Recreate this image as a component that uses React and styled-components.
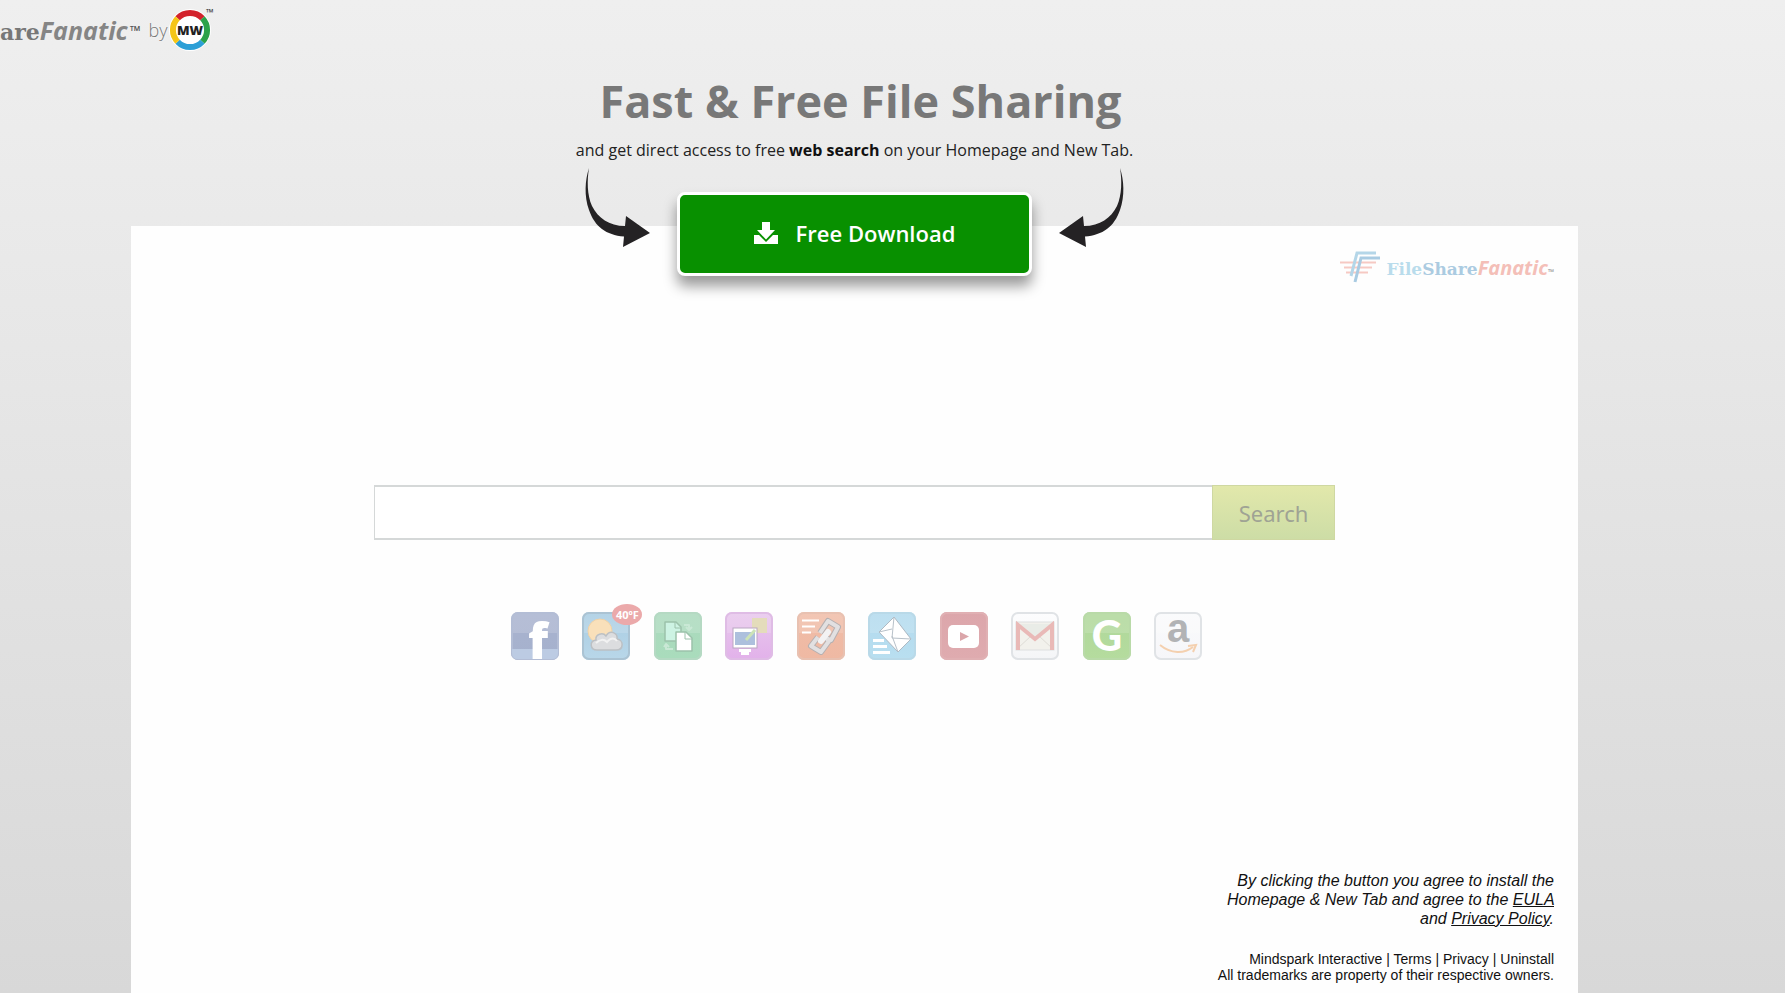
import { useId } from 'react';
import styled, { createGlobalStyle } from 'styled-components';

const App = () => {
  return (
    <Page>
      <GlobalStyle />
      <TopBar>
        <BrandLink href='#home'>
          <Slab>are</Slab>
          <Slanted>Fanatic</Slanted>
          <Trademark>™</Trademark>
        </BrandLink>
        <By>by</By>
        <MwLogo />
      </TopBar>
      <Column>
        <Hero>
          <Title>Fast &amp; Free File Sharing</Title>
          <Subtitle>
            and get direct access to free <b>web search</b> on your Homepage and
            New Tab.
          </Subtitle>
          <DownloadRow>
            <Arrow />
            <DownloadButton type='button'>
              <DownloadIcon />
              Free Download
            </DownloadButton>
            <Arrow $flip />
          </DownloadRow>
        </Hero>
        <Panel>
          <ProductLogo>
            <FlagMark />
            <ProductName>
              <ProductFile>File</ProductFile>
              <ProductShare>Share</ProductShare>
              <ProductFanatic>Fanatic</ProductFanatic>
              <ProductTm>™</ProductTm>
            </ProductName>
          </ProductLogo>
          <SearchForm onSubmit={(e) => e.preventDefault()}>
            <SearchInput type='text' aria-label='Search the web' />
            <SearchButton type='submit'>Search</SearchButton>
          </SearchForm>
          <Shortcuts>
            {shortcuts.map(({ name, Art, badge, ...tile }) => (
              <Shortcut key={name} href={`#${name}`} aria-label={name}>
                <Tile {...tile}>
                  <Art />
                </Tile>
                {badge && <Badge>{badge}</Badge>}
              </Shortcut>
            ))}
          </Shortcuts>
          <Footer>
            <Agreement>
              By clicking the button you agree to install the Homepage &amp; New
              Tab and agree to the <a href='#eula'>EULA</a> and{' '}
              <a href='#privacy-policy'>Privacy Policy</a>.
            </Agreement>
            <Legal>
              <a href='#mindspark'>Mindspark Interactive</a> |{' '}
              <a href='#terms'>Terms</a> | <a href='#privacy'>Privacy</a> |{' '}
              <a href='#uninstall'>Uninstall</a>
              <br />
              All trademarks are property of their respective owners.
            </Legal>
          </Footer>
        </Panel>
      </Column>
    </Page>
  );
};

export default App;

const MwLogo = () => (
  <MwSvg viewBox='0 0 46 48' role='img' aria-label='MW'>
    <circle cx='22' cy='26' r='21' fill='#fff' />
    <g fill='none' strokeWidth='6'>
      <path d='M9.6 14.3A17 17 0 0 1 34.4 14.3' stroke='#d3222c' />
      <path d='M34.4 14.3A17 17 0 0 1 34.4 37.7' stroke='#2ba24a' />
      <path d='M34.4 37.7A17 17 0 0 1 9.6 37.7' stroke='#2c9fd6' />
      <path d='M9.6 37.7A17 17 0 0 1 9.6 14.3' stroke='#f5c518' />
    </g>
    <text
      x='22'
      y='31'
      textAnchor='middle'
      fontFamily='"Open Sans", sans-serif'
      fontWeight='800'
      fontSize='13'
      fill='#222'
    >
      MW
    </text>
    <text x='38' y='12' fontFamily='"Open Sans", sans-serif' fontSize='10' fill='#333'>
      ™
    </text>
  </MwSvg>
);

const Arrow = ({ $flip }) => (
  <ArrowSvg $flip={$flip} viewBox='0 0 66 80' aria-hidden='true'>
    <path
      d='M5 0C1 12 0 28 5 42C11 59 22 67 40 68.500L39 79L66 65L42 48L41 58C25 58 14 50 8 38C3 27 3 12 5 0Z'
      fill='#242224'
    />
  </ArrowSvg>
);

const DownloadIcon = () => (
  <svg width='24' height='22' viewBox='0 0 24 22' fill='#fff' aria-hidden='true'>
    <path d='M8 0H16V8H21L12 17.500L3 8H8Z' />
    <path d='M0 13H5L12 20L19 13H24V22H0Z' />
  </svg>
);

const FlagMark = () => (
  <svg width='40' height='32' viewBox='0 0 40 32' fill='none' aria-hidden='true'>
    <path d='M0 11.500H36M4 16.500H32M6 21.500H28' stroke='#f6c9c3' strokeWidth='2' />
    <path d='M36 2H17L11 25' stroke='#b4d6e8' strokeWidth='3' />
    <path d='M40 7H21L15 31' stroke='#a9cbe2' strokeWidth='3' />
  </svg>
);

const Tile = ({ top, bottom, edge, gloss = 0.15, children }) => {
  const id = useId();
  return (
    <TileSvg viewBox='0 0 48 48' aria-hidden='true'>
      <defs>
        <linearGradient id={id} x1='0' y1='0' x2='0' y2='1'>
          <stop offset='0' stopColor={top} />
          <stop offset='1' stopColor={bottom} />
        </linearGradient>
      </defs>
      <rect width='48' height='48' rx='7' fill={`url(#${id})`} />
      <path d='M0 21V7Q0 0 7 0H41Q48 0 48 7V21Z' fill='#fff' opacity={gloss} />
      <rect x='1' y='1' width='46' height='46' rx='6' fill='none' stroke={edge} strokeWidth='2' />
      {children}
    </TileSvg>
  );
};

const FacebookArt = () => (
  <>
    <path d='M1 37H47V41Q47 47 41 47H7Q1 47 1 41Z' fill='#bccbe3' />
    <text x='17' y='47' fontFamily='"Open Sans", sans-serif' fontWeight='800' fontSize='49' fill='#fff'>
      f
    </text>
  </>
);

const WeatherArt = () => (
  <>
    <circle cx='18' cy='19' r='12' fill='#f9e0ba' stroke='#efd2a8' />
    <path
      d='M15 38C8 38 7 29 14 28C13 22 21 20 24 24C28 17 36 21 35 27C42 28 42 38 34 38Z'
      fill='#dcdddf'
      stroke='#bcc0c4'
      strokeWidth='1.500'
    />
    <path d='M14 31C18 27 22 27 25 30C29 25 33 26 35 29' stroke='#f2f2f2' strokeWidth='2' fill='none' />
  </>
);

const FilesArt = () => (
  <g strokeLinejoin='round'>
    <path d='M11 10H22L27 15V29H11Z' fill='#cdf3e3' stroke='#9cc2ab' strokeWidth='1.500' />
    <path d='M21 10V16H27' fill='none' stroke='#9cc2ab' />
    <path d='M22 20H32L38 26V39H22Z' fill='#fff' stroke='#9cc2ab' strokeWidth='1.500' />
    <path d='M31 20V27H38' fill='none' stroke='#9cc2ab' />
    <path d='M30 13H35V17M32 15L35 18L38 15M19 37H12V33M10 35L12 32L15 35' fill='none' stroke='#c9e8d5' strokeWidth='2' />
  </g>
);

const ScreenArt = () => (
  <>
    <rect x='27' y='6' width='15' height='15' fill='#e4dcbb' />
    <rect x='8' y='16' width='24' height='20' fill='#fff' stroke='#b9a7c1' />
    <rect x='10' y='20' width='20' height='13' fill='#adc0dd' />
    <path d='M21 28L30 18' stroke='#cce3b7' strokeWidth='3' />
    <path d='M14 38.500H26M16 41.500H24' stroke='#fff' strokeWidth='3' />
  </>
);

const LinkArt = () => (
  <>
    <path d='M5 8.500H22M5 14.500H18M5 20.500H14' stroke='#fff' strokeWidth='2' />
    <g fill='none' strokeLinejoin='round'>
      <g stroke='#b5b0b1' strokeWidth='6'>
        <path d='M23 21L31 9L41 15L34 28L29 26' />
        <path d='M21 25L14 34L24 40L32 29L28 25' />
      </g>
      <g stroke='#e2e0e1' strokeWidth='4'>
        <path d='M23 21L31 9L41 15L34 28L29 26' />
        <path d='M21 25L14 34L24 40L32 29L28 25' />
      </g>
      <path d='M24 29L31 20' stroke='#f3f2f3' strokeWidth='6' strokeLinecap='round' />
    </g>
  </>
);

const MailArt = () => (
  <>
    <path d='M5 28.500H16M5 34.500H19M5 40.500H22' stroke='#fff' strokeWidth='3' />
    <path
      d='M11 20L26 5L43 27L30 40Z'
      fill='#fff'
      stroke='#aeb9c3'
      strokeLinejoin='round'
    />
    <path d='M11 20L24 17M26 5L24 26L43 27M24 24L30 40' fill='none' stroke='#b8c1c9' />
  </>
);

const YoutubeArt = () => (
  <>
    <rect x='8' y='13' width='31' height='23' rx='5' fill='#fff' />
    <path d='M20 20L29 24.500L20 29Z' fill='#dba6aa' />
  </>
);

const GmailArt = () => (
  <>
    <rect x='5' y='10' width='38' height='28' fill='#f2f1ec' stroke='#dedfe0' />
    <path d='M6 37L20 24M42 37L28 24' stroke='#dedcd6' />
    <path d='M9 12L24 26L39 12' fill='#e9ece7' />
    <path d='M7 38V13L24 27L41 13V38' fill='none' stroke='#e9b9b7' strokeWidth='4' />
  </>
);

const GrouponArt = () => (
  <text x='24' y='39' textAnchor='middle' fontFamily='Lato, sans-serif' fontWeight='900' fontSize='42' fill='#fff'>
    G
  </text>
);

const AmazonArt = () => (
  <>
    <text x='24' y='30' textAnchor='middle' fontFamily='"Liberation Sans", sans-serif' fontWeight='700' fontSize='40' fill='#b2b3b5'>
      a
    </text>
    <path d='M6 33C17 42 30 42 39 35' fill='none' stroke='#f4d0af' strokeWidth='2' />
    <path d='M34 34L42 33L39 40' fill='none' stroke='#f4d0af' strokeWidth='2' />
  </>
);

const shortcuts = [
  { name: 'Facebook', Art: FacebookArt, top: '#a9b3cf', bottom: '#a5b1cd', edge: '#b3bdd5' },
  { name: 'Weather', Art: WeatherArt, top: '#a8cce2', bottom: '#b9d7e9', edge: '#abc3d3', badge: '40ºF' },
  { name: 'Files', Art: FilesArt, top: '#abd9bd', bottom: '#a9dcbc', edge: '#b5d9c3' },
  { name: 'Screen', Art: ScreenArt, top: '#e8c8ed', bottom: '#e2b1ea', edge: '#dfbce5' },
  { name: 'Links', Art: LinkArt, top: '#f0bca7', bottom: '#efb9a3', edge: '#e8c1b1' },
  { name: 'Mail', Art: MailArt, top: '#b2daee', bottom: '#b9dff0', edge: '#b9d9e8' },
  { name: 'YouTube', Art: YoutubeArt, top: '#dca6ab', bottom: '#dfabaf', edge: '#e0b0b3', gloss: 0 },
  { name: 'Gmail', Art: GmailArt, top: '#fdfdfe', bottom: '#f4f5f7', edge: '#e0e3e6' },
  { name: 'Groupon', Art: GrouponArt, top: '#afd79a', bottom: '#b5dc9e', edge: '#b9daa8' },
  { name: 'Amazon', Art: AmazonArt, top: '#fafbfc', bottom: '#f6f6f9', edge: '#e0e3e6' },
];

const GlobalStyle = createGlobalStyle`
  * {
    box-sizing: border-box;
  }
  body {
    margin: 0;
    font-family: 'Open Sans', sans-serif;
    color: #222;
  }
`;

const Page = styled.div`
  display: flex;
  flex-direction: column;
  min-height: 100vh;
  background: linear-gradient(#efefef, #d8d8d8);
`;

const TopBar = styled.header`
  display: flex;
  align-items: center;
  height: 60px;
`;

const MwSvg = styled.svg`
  width: 46px;
  height: 48px;
  margin-bottom: 4px;
  overflow: visible;
`;

const BrandLink = styled.a`
  display: flex;
  align-items: baseline;
  color: #858585;
  text-decoration: none;
`;

const Slab = styled.span`
  font: bold 22px 'DejaVu Serif', serif;
  color: #777;
`;

const Slanted = styled.span`
  font: italic 700 25px 'Open Sans', sans-serif;
`;

const Trademark = styled.span`
  align-self: center;
  margin-left: 2px;
  font-size: 14px;
  font-weight: 700;
  color: #555;
`;

const By = styled.span`
  margin-left: 8px;
  font-size: 18px;
  font-weight: 300;
  color: #777;
  text-shadow: 0 0 2px #fff;
`;

const Column = styled.main`
  display: flex;
  flex: 1;
  flex-direction: column;
  margin: 0 207px 0 131px;
`;

const Hero = styled.section`
  position: relative;
  z-index: 1;
  display: flex;
  flex-direction: column;
  align-items: center;
  padding-top: 8px;
`;

const Title = styled.h1`
  margin: 0;
  padding-left: 12px;
  font-size: 45px;
  line-height: 66px;
  font-weight: 700;
  color: #787878;
`;

const Subtitle = styled.p`
  margin: 4px 0 0;
  font-size: 16px;
  line-height: 24px;

  > b {
    color: #111;
  }
`;

const DownloadRow = styled.div`
  display: flex;
  align-items: flex-start;
  gap: 27px;
  padding-top: 6px;
`;

const ArrowSvg = styled.svg`
  width: 66px;
  height: 80px;
  transform: ${(props) => (props.$flip ? 'scaleX(-1)' : 'none')};
`;

const DownloadButton = styled.button`
  display: flex;
  align-items: center;
  justify-content: center;
  gap: 18px;
  width: 355px;
  height: 84px;
  margin-top: 24px;
  padding: 0 6px 2px;
  border: 3px solid #fff;
  border-radius: 8px;
  background: #089000;
  box-shadow: 0 10px 14px rgba(0, 0, 0, 0.4);
  color: #fff;
  font: 600 22px 'Open Sans', sans-serif;
  cursor: pointer;
`;

const Panel = styled.section`
  display: flex;
  flex: 1;
  flex-direction: column;
  align-items: center;
  margin-top: -50px;
  padding: 25px 24px 10px;
  background: #fefefe;
`;

const ProductLogo = styled.div`
  display: flex;
  align-items: center;
  align-self: flex-end;
  gap: 6px;
`;

const ProductName = styled.div`
  display: flex;
  align-items: baseline;
  font: bold 17px 'DejaVu Serif', serif;
`;

const ProductFile = styled.span`
  color: #b9dcec;
`;

const ProductShare = styled.span`
  color: #abcbe1;
`;

const ProductFanatic = styled.span`
  font: italic 700 20px 'Open Sans', sans-serif;
  color: #f4bfb8;
`;

const ProductTm = styled.span`
  font: 8px 'Open Sans', sans-serif;
  color: #888;
`;

const SearchForm = styled.form`
  display: flex;
  width: 69%;
  max-width: 961px;
  height: 55px;
  margin-top: 202px;
`;

const SearchInput = styled.input`
  flex: 1;
  min-width: 0;
  padding: 0 16px;
  border: 2px solid #d5d8d8;
  border-width: 2px 0 2px 1px;
  background: #fff;
  font: 20px 'Open Sans', sans-serif;
`;

const SearchButton = styled.button`
  width: 123px;
  border: 1px solid #cfd8a2;
  background: linear-gradient(#e2e8ab, #cddda6);
  color: #9fa394;
  font: 22px 'Noto Sans', 'Open Sans', sans-serif;
  cursor: pointer;
`;

const Shortcuts = styled.nav`
  display: flex;
  justify-content: space-between;
  width: 695px;
  padding-left: 4px;
  margin-top: 72px;
`;

const Shortcut = styled.a`
  position: relative;
  height: 48px;
`;

const TileSvg = styled.svg`
  display: block;
  width: 48px;
  height: 48px;
  overflow: visible;
`;

const Badge = styled.span`
  position: absolute;
  top: -8px;
  right: -12px;
  width: 30px;
  border-radius: 50%;
  background: #eba9aa;
  color: #fff;
  font-size: 11px;
  line-height: 21px;
  font-weight: 700;
  text-align: center;
`;

const Footer = styled.footer`
  align-self: flex-end;
  margin-top: auto;
  font-family: 'Liberation Sans', Arial, sans-serif;
  text-align: right;
  color: #111;

  a {
    color: inherit;
  }
`;

const Agreement = styled.p`
  max-width: 340px;
  margin: 0 0 23px auto;
  font-size: 16px;
  line-height: 19px;
  font-style: italic;
`;

const Legal = styled.p`
  margin: 0;
  font-size: 14px;
  line-height: 16px;

  a {
    text-decoration: none;
  }
`;
